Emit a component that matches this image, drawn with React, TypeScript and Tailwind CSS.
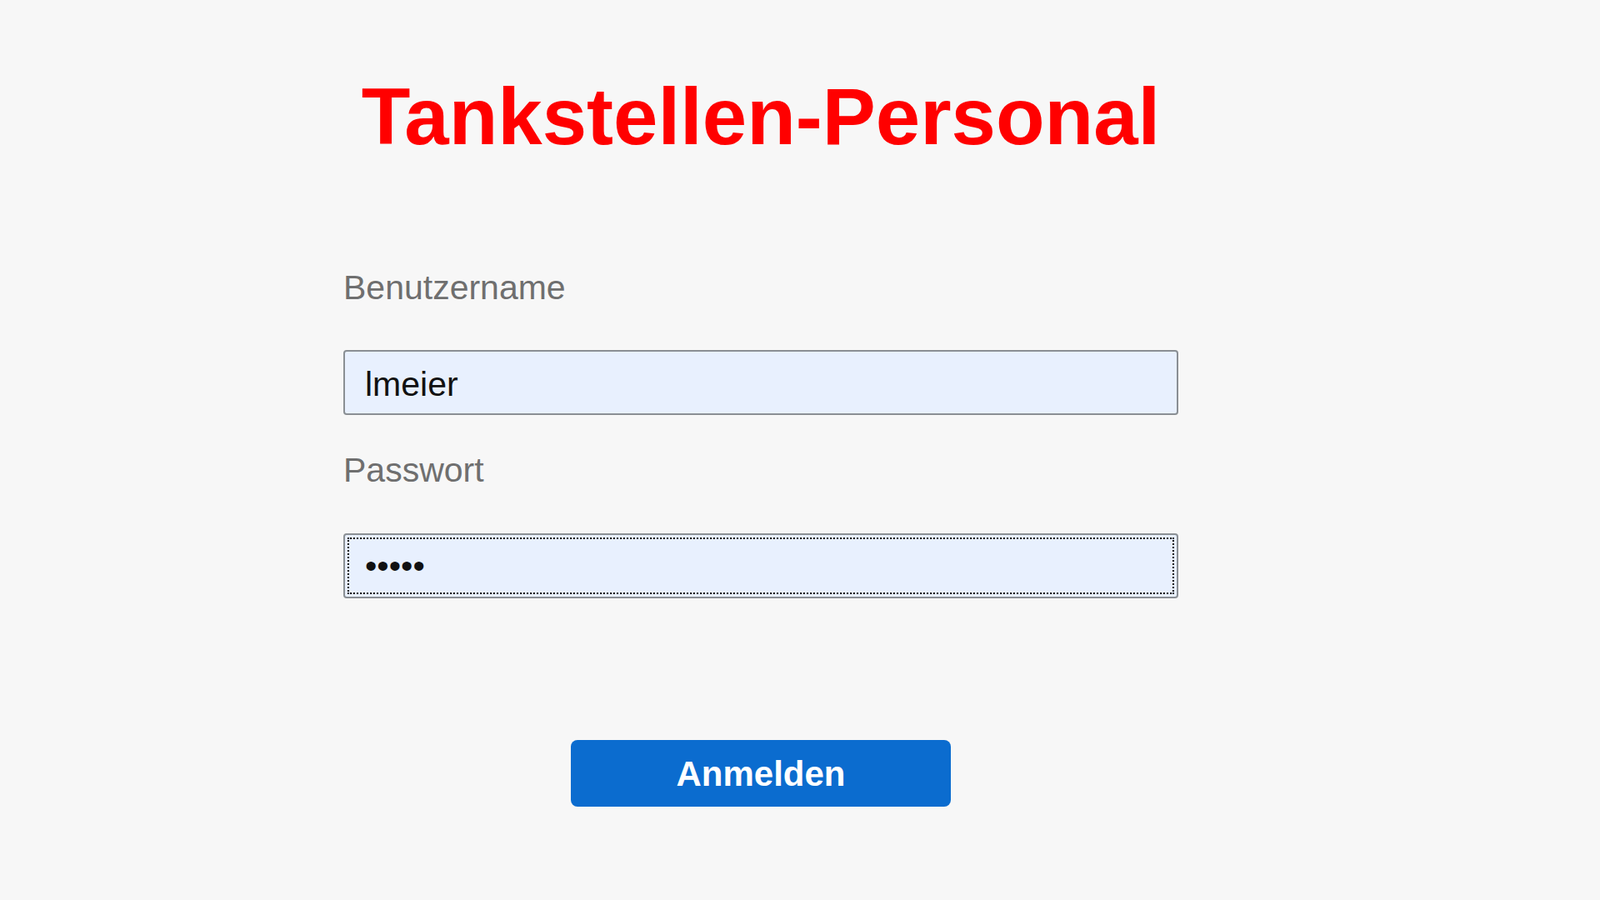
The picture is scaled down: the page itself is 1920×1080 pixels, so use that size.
import React, { useState } from "react";

const LoginPage = () => {
  const [user, setUser] = useState("lmeier");
  const [pass, setPass] = useState("abcde");

  return (
    <div className="min-h-screen w-full bg-[#f7f7f7] font-['Liberation_Sans',Arial,sans-serif]">
      <div className="ml-[412px] w-[1002px] pt-[92px] flex flex-col">
        <h1 className="text-center text-[96px] leading-none font-bold text-[#ff0000]">
          Tankstellen-Personal
        </h1>

        {/* Formular */}
        <label className="mt-[133px] text-[41px] leading-[48px] text-[#6f6f6f]">
          Benutzername
        </label>
        <input
          type="text"
          value={user}
          onChange={(e) => setUser(e.target.value)}
          className="mt-[51px] h-[78px] w-full rounded-[4px] border-2 border-[#8a8f94] bg-[#e8f0fe] px-[24px] pt-[4px] text-[41px] text-[#111] outline-none"
        />

        <label className="mt-[42px] text-[41px] leading-[48px] text-[#6f6f6f]">
          Passwort
        </label>
        <input
          type="password"
          value={pass}
          onChange={(e) => setPass(e.target.value)}
          className="mt-[52px] h-[78px] w-full rounded-[4px] border-2 border-[#8a8f94] bg-[#e8f0fe] px-[24px] text-[41px] text-[#111] outline-2 outline-dotted outline-black outline-offset-[-7px]"
        />

        <div className="mt-[170px] flex justify-center">
          <button className="h-[80px] w-[456px] rounded-[8px] bg-[#0b6ccf] text-[42px] font-bold text-white flex items-center justify-center">
            Anmelden
          </button>
        </div>
      </div>
    </div>
  );
};

export default function App() {
  return <LoginPage />;
}
